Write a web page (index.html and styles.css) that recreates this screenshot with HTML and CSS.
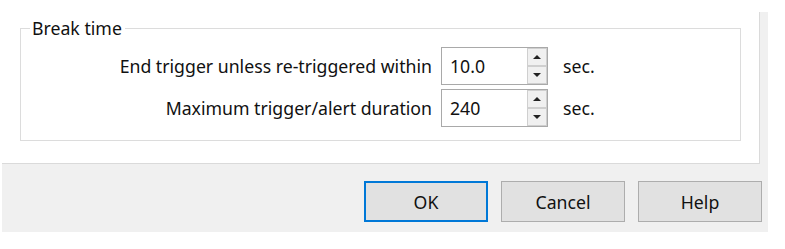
FILE: index.html
```html
<!DOCTYPE html>
<html lang="en">
<head>
    <meta charset="UTF-8">
    <title>Break time</title>
    <link rel="stylesheet" href="styles.css">
</head>
<body>
    <div class="dialog">
        <div class="tab-page">
            <fieldset class="group">
                <legend>Break time</legend>
                <div class="row">
                    <label class="row-label">End trigger unless re-triggered within</label>
                    <div class="spin">
                        <input type="text" value="10.0">
                        <div class="spin-buttons">
                            <span class="spin-btn up"></span>
                            <span class="spin-btn down"></span>
                        </div>
                    </div>
                    <span class="unit">sec.</span>
                </div>
                <div class="row">
                    <label class="row-label">Maximum trigger/alert duration</label>
                    <div class="spin">
                        <input type="text" value="240">
                        <div class="spin-buttons">
                            <span class="spin-btn up"></span>
                            <span class="spin-btn down"></span>
                        </div>
                    </div>
                    <span class="unit">sec.</span>
                </div>
            </fieldset>
        </div>
        <div class="buttons">
            <button class="btn default">OK</button>
            <button class="btn">Cancel</button>
            <button class="btn">Help</button>
        </div>
    </div>
</body>
</html>
```

FILE: styles.css
```css
body {
    margin: 0;
    padding: 0;
    background-color: #fff;
    font-family: "Noto Sans", "Open Sans", sans-serif;
    font-size: 17.7px;
    color: #111;
}
.dialog {
    margin: 12px 0 0 2px;
    width: 766px;
    height: 220px;
    background-color: #f0f0f0;
}
.tab-page {
    box-sizing: border-box;
    width: 758px;
    height: 152px;
    padding: 7px 0 0 18px;
    background-color: #fff;
    border-right: 1px solid #dadada;
    border-bottom: 1px solid #dadada;
}
.group {
    box-sizing: border-box;
    width: 721px;
    height: 122px;
    margin: 0;
    padding: 10px 0 0 0;
    border: 1px solid #dcdcdc;
}
.group legend {
    margin-left: 9px;
    padding: 0 3px 0 2px;
    height: 18px;
    line-height: 18px;
}
.row {
    display: flex;
    align-items: center;
    margin-bottom: 4px;
}
.row-label {
    width: 411px;
    text-align: right;
}
.spin {
    display: flex;
    box-sizing: border-box;
    width: 107px;
    height: 38px;
    margin-left: 9px;
    border: 1px solid #a9a9a9;
    background-color: #fff;
}
.spin input {
    flex: 1;
    min-width: 0;
    border: none;
    outline: none;
    padding: 0 0 0 8px;
    font: inherit;
    color: #111;
    background: transparent;
}
.spin-buttons {
    display: flex;
    flex-direction: column;
    width: 20px;
}
.spin-btn {
    flex: 1;
    display: flex;
    justify-content: center;
    align-items: center;
    background-color: #f0f0f0;
    border: 1px solid #cfcfcf;
}
.spin-btn.up::after {
    content: "";
    border-left: 4px solid transparent;
    border-right: 4px solid transparent;
    border-bottom: 4px solid #222;
}
.spin-btn.down::after {
    content: "";
    border-left: 4px solid transparent;
    border-right: 4px solid transparent;
    border-top: 4px solid #222;
}
.unit {
    margin-left: 15px;
}
.buttons {
    display: flex;
    justify-content: flex-end;
    gap: 13px;
    padding: 17px 6px 0 0;
}
.btn {
    box-sizing: border-box;
    width: 124px;
    height: 41px;
    background-color: #e1e1e1;
    border: 1px solid #adadad;
    font: inherit;
    color: #111;
    padding: 0;
}
.btn.default {
    border: 2px solid #0078d7;
}
```
